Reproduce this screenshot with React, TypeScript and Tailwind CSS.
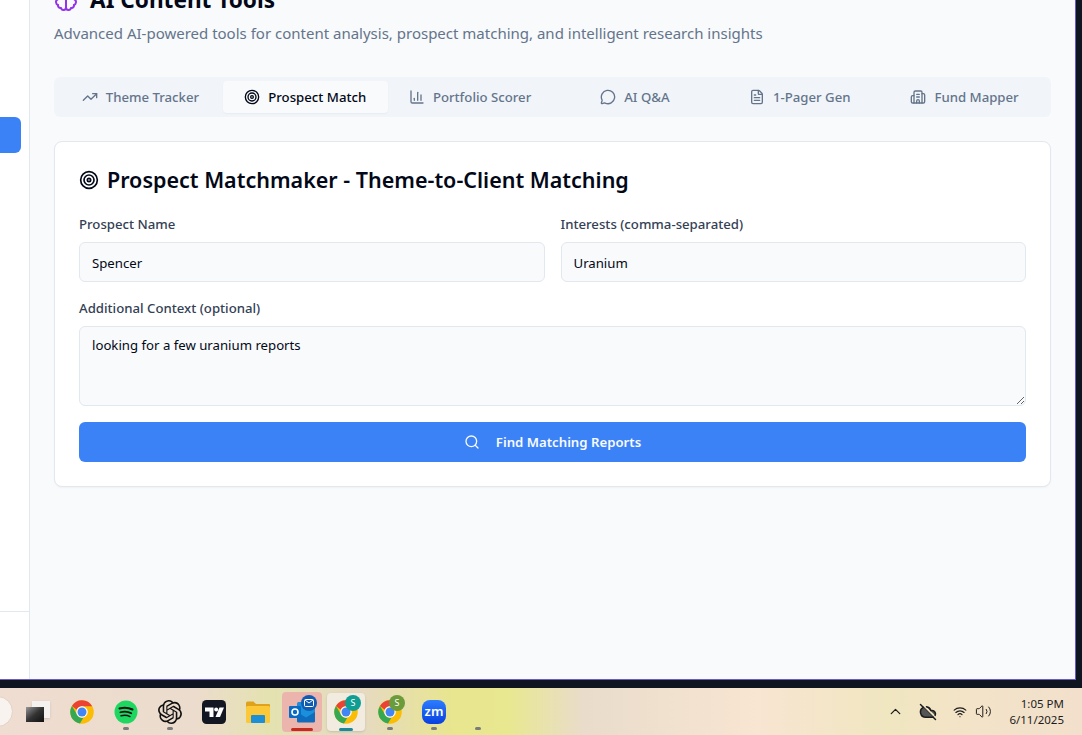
import { BarChart3, FileText, MessageCircle, Search, Target, TrendingUp, Building2, ChevronUp, Wifi, Volume2, CloudOff } from 'lucide-react'
import { SiOpenai } from 'react-icons/si'

const tabs = [
  { label: 'Theme Tracker', icon: TrendingUp },
  { label: 'Prospect Match', icon: Target, active: true },
  { label: 'Portfolio Scorer', icon: BarChart3 },
  { label: 'AI Q&A', icon: MessageCircle },
  { label: '1-Pager Gen', icon: FileText },
  { label: 'Fund Mapper', icon: Building2 },
]

function BrainIcon() {
  return (
    <svg width="24" height="24" viewBox="0 0 24 24" fill="none" stroke="#9333ea" strokeWidth="2" strokeLinecap="round" strokeLinejoin="round">
      <path d="M9.500 2A2.500 2.500 0 0 1 12 4.500v15a2.500 2.500 0 0 1-4.960.440 2.500 2.500 0 0 1-2.960-3.080 3 3 0 0 1-.340-5.580 2.500 2.500 0 0 1 1.320-4.240 2.500 2.500 0 0 1 1.980-3A2.500 2.500 0 0 1 9.500 2Z" />
      <path d="M14.500 2A2.500 2.500 0 0 0 12 4.500v15a2.500 2.500 0 0 0 4.960.440 2.500 2.500 0 0 0 2.960-3.080 3 3 0 0 0 .340-5.580 2.500 2.500 0 0 0-1.320-4.240 2.500 2.500 0 0 0-1.980-3A2.500 2.500 0 0 0 14.500 2Z" />
    </svg>
  )
}

function ChromeIcon() {
  return (
    <svg width="24" height="24" viewBox="0 0 48 48">
      <circle cx="24" cy="24" r="23.500" fill="#fbbc04" />
      <path d="M24 .5A23.500 23.500 0 0 1 44.400 12.500H24a11.500 11.500 0 0 0-10.400 6.800L3.900 11.800A23.500 23.500 0 0 1 24 .5z" fill="#ea4335" />
      <path d="M3.900 11.800l10 17.400a11.500 11.500 0 0 0 12.700 6.200L20 47.200A23.500 23.500 0 0 1 3.900 11.800z" fill="#34a853" />
      <circle cx="24" cy="24" r="11.500" fill="#fff" />
      <circle cx="24" cy="24" r="9" fill="#4285f4" />
    </svg>
  )
}

function Outlook() {
  return (
    <svg width="27" height="26" viewBox="0 0 27 26">
      <rect x="8" y="3" width="18" height="20" rx="1.500" fill="#1a8fdb" />
      <path d="M8 13l9 5.500 9-5.500v9a1.500 1.500 0 0 1-1.500 1.500h-15A1.500 1.500 0 0 1 8 22z" fill="#0f6cbd" />
      <rect x="0" y="7" width="12" height="12" rx="1" fill="#0a6bc4" />
      <circle cx="6" cy="13" r="3" fill="none" stroke="#fff" strokeWidth="1.600" />
    </svg>
  )
}

function Slot({ children }: { children?: React.ReactNode }) {
  return <div className="relative flex h-[47px] w-[44px] shrink-0 items-center justify-center">{children}</div>
}

function Pip() {
  return <span className="absolute bottom-[5px] left-1/2 h-[3px] w-[6px] -translate-x-1/2 rounded-full bg-[#7b7b7b]" />
}

function Badge({ className, children }: { className: string; children?: React.ReactNode }) {
  return (
    <span className={`absolute top-[7px] flex h-[16px] w-[16px] items-center justify-center rounded-full text-[9px] text-white ${className}`}>
      {children}
    </span>
  )
}

function Taskbar() {
  return (
    <div className="flex h-[47px] shrink-0 items-center bg-[linear-gradient(90deg,#eeddd0_0%,#ecdccd_18%,#e4e2b0_25%,#e6d9c4_33%,#e8e68e_42%,#e8e890_47%,#e9dccb_54%,#f8e5d2_70%,#f0e6c0_82%,#f3e3c8_90%,#f2e0cc_100%)]">
      <div className="ml-[-26px] h-[31px] w-[39px] shrink-0 rounded-full border border-[#e3d3c6] bg-[#f8f3ef]" />
      <div className="relative ml-[13px] mr-[10px] h-[21px] w-[24px] shrink-0">
        <div className="absolute right-0 top-0 h-[17px] w-[18px] bg-[#f4f1ee] shadow-sm" />
        <div className="absolute bottom-0 left-0 h-[15px] w-[18px] bg-gradient-to-br from-[#999] via-[#333] to-[#111]" />
      </div>
      <Slot><ChromeIcon /></Slot>
      <Slot>
        <svg width="24" height="24" viewBox="0 0 24 24">
          <circle cx="12" cy="12" r="11.500" fill="#1ed760" />
          <g fill="none" stroke="#111" strokeLinecap="round">
            <path d="M5.500 8.500c4-1.200 9-1 13 1" strokeWidth="2" />
            <path d="M6.300 12.300c3.600-1 7.800-.8 11 1" strokeWidth="1.700" />
            <path d="M7 15.800c3-.8 6.500-.6 9 .8" strokeWidth="1.400" />
          </g>
        </svg>
        <Pip />
      </Slot>
      <Slot>
        <SiOpenai size={24} color="#111" />
        <Pip />
      </Slot>
      <Slot>
        <svg width="24" height="24" viewBox="0 0 24 24">
          <rect width="24" height="24" rx="4.500" fill="#131722" />
          <path d="M3 7.500h8.500v9.500H7.500v-5.500H3z" fill="#fff" />
          <circle cx="14.200" cy="9.600" r="2" fill="#fff" />
          <path d="M17.500 7.500H22l-4 9.500h-4.500z" fill="#fff" />
        </svg>
      </Slot>
      <Slot>
        <svg width="24" height="24" viewBox="0 0 24 24">
          <path d="M0 3a1.500 1.500 0 0 1 1.500-1.500h6L10 4h13a1 1 0 0 1 1 1v4H0z" fill="#e0a21b" />
          <rect x="0" y="6" width="24" height="17" rx="1.500" fill="#fbc83a" />
          <rect x="5" y="15" width="14" height="8" rx="1" fill="#1d8fd6" />
        </svg>
      </Slot>
      <Slot>
        <div className="flex h-[40px] w-[40px] items-center justify-center rounded-[4px] bg-[#ebb5ae]">
          <Outlook />
        </div>
        <Badge className="left-[21px] top-[6px] bg-[#0f5cb0]">
          <svg width="10" height="8" viewBox="0 0 10 8" fill="none" stroke="#fff" strokeWidth="1">
            <rect x=".5" y=".5" width="9" height="7" rx="1" />
            <path d="M1 1l4 3 4-3" />
          </svg>
        </Badge>
        <span className="absolute bottom-[4px] left-[11px] h-[3px] w-[22px] rounded-full bg-[#c42b1c]" />
      </Slot>
      <Slot>
        <div className="flex h-[38px] w-[38px] items-center justify-center rounded-[4px] bg-[#f1ebe0] shadow-sm">
          <ChromeIcon />
        </div>
        <Badge className="left-[21px] bg-[#0f9d94]">S</Badge>
        <span className="absolute bottom-[4px] left-[15px] h-[3px] w-[14px] rounded-full bg-[#1a8a9a]" />
      </Slot>
      <Slot>
        <ChromeIcon />
        <Badge className="left-[21px] bg-[#6b9b3a]">S</Badge>
        <Pip />
      </Slot>
      <Slot>
        <div className="flex h-[24px] w-[24px] items-center justify-center rounded-[8px] bg-gradient-to-b from-[#2d7cff] to-[#0b3fe0] text-[13px] font-semibold leading-none text-white">zm</div>
        <Pip />
      </Slot>
      <Slot><Pip /></Slot>
      <div className="ml-auto flex items-center text-[#1c1c1c]">
        <ChevronUp size={17} strokeWidth={1.800} />
        <CloudOff size={18} strokeWidth={2} className="ml-[15px] fill-[#555]" />
        <Wifi size={14} strokeWidth={2} className="ml-[16px]" />
        <Volume2 size={17} strokeWidth={1.400} className="ml-[8px]" />
        <div className="ml-[12px] mr-[18px] w-[60px] text-right text-[11.500px] leading-[16px]">
          <div>1:05 PM</div>
          <div>6/11/2025</div>
        </div>
      </div>
    </div>
  )
}

export default function App() {
  return (
    <div className="flex h-[735px] w-[1082px] flex-col overflow-hidden bg-[#0f1521] font-['Noto_Sans',sans-serif]">
      <div className="flex min-h-0 flex-1 pb-[8px] pr-[6px]">
        <div className="flex w-full overflow-hidden border-b border-r border-[#6a5acd]">
          {/* Sidebar */}
          <aside className="flex w-[30px] shrink-0 flex-col border-r border-[#e2e8f0] bg-white">
            <div className="mt-[117px] h-[36px] w-[21px] rounded-r-[6px] bg-[#3b82f6]" />
            <div className="mt-[458px] border-t border-[#e2e8f0]" />
          </aside>

          {/* Main */}
          <main className="min-w-0 flex-1 bg-[#f8fafc] px-6">
            <div className="mt-[-16px] flex items-center gap-3">
              <BrainIcon />
              <h1 className="text-[22.600px] font-bold leading-[32px] text-[#020817]">AI Content Tools</h1>
            </div>
            <p className="mt-[5px] text-[15px] leading-[24px] text-[#64748b]">
              Advanced AI-powered tools for content analysis, prospect matching, and intelligent research insights
            </p>

            <div className="mt-[32px] grid h-[40px] grid-cols-6 rounded-[6px] bg-[#f1f5f9] p-1">
              {tabs.map((tab) => (
                <button
                  key={tab.label}
                  className={`flex items-center justify-center gap-2 rounded-[4px] text-[13.200px] font-medium ${
                    tab.active ? 'bg-[#f8fafc] text-[#020817] shadow-[0_1px_2px_rgba(0,0,0,0.04)]' : 'text-[#64748b]'
                  }`}
                >
                  <tab.icon size={16} strokeWidth={2} />
                  <span className="pt-[2px]">{tab.label}</span>
                </button>
              ))}
            </div>

            <section className="mt-6 rounded-[8px] border border-[#e2e8f0] bg-white p-6 shadow-[0_1px_2px_rgba(0,0,0,0.04)]">
              <h2 className="flex items-center gap-2 text-[21.500px] font-semibold leading-[27px] text-[#020817]">
                <Target size={20} strokeWidth={2} />
                Prospect Matchmaker - Theme-to-Client Matching
              </h2>

              <div className="mt-6 grid grid-cols-2 gap-4">
                <div>
                  <label className="block text-[13.200px] font-medium leading-[14px] text-[#334155]">Prospect Name</label>
                  <input
                    defaultValue="Spencer"
                    className="mt-[11px] h-[40px] w-full rounded-[6px] border border-[#e2e8f0] bg-[#f8fafc] px-3 pt-[2px] text-[13.200px] text-[#020817]"
                  />
                </div>
                <div>
                  <label className="block text-[13.200px] font-medium leading-[14px] text-[#334155]">Interests (comma-separated)</label>
                  <input
                    defaultValue="Uranium"
                    className="mt-[11px] h-[40px] w-full rounded-[6px] border border-[#e2e8f0] bg-[#f8fafc] px-3 pt-[2px] text-[13.200px] text-[#020817]"
                  />
                </div>
              </div>

              <label className="mt-[19px] block text-[13.200px] font-medium leading-[14px] text-[#334155]">Additional Context (optional)</label>
              <textarea
                defaultValue="looking for a few uranium reports"
                className="mt-[11px] block h-[80px] w-full rounded-[6px] border border-[#e2e8f0] bg-[#f8fafc] px-3 py-2 text-[13.200px] leading-[20px] text-[#020817]"
              />

              <button className="mt-4 flex h-[40px] w-full items-center justify-center gap-4 rounded-[6px] bg-[#3b82f6] text-[13.200px] font-semibold text-[#f8fafc]">
                <Search size={16} strokeWidth={2} />
                <span className="pt-[2px]">Find Matching Reports</span>
              </button>
            </section>
          </main>
        </div>
      </div>
      <Taskbar />
    </div>
  )
}
